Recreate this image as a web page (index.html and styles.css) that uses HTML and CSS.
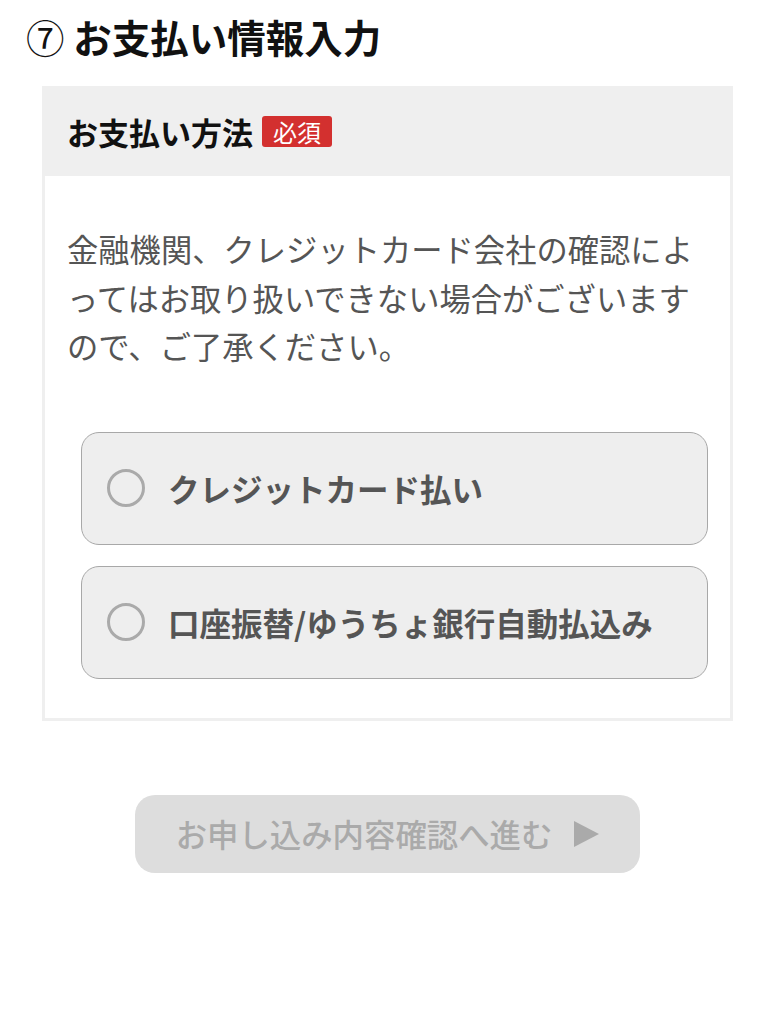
FILE: index.html
```html
<!DOCTYPE html>
<html lang="ja">
<head>
<meta charset="utf-8">
<link rel="stylesheet" href="styles.css">
</head>
<body>
<h1 class="title"><span class="num">⑦</span> お支払い情報入力</h1>
<section class="card">
  <div class="card-head">
    <span class="card-title">お支払い方法</span>
    <span class="badge">必須</span>
  </div>
  <div class="card-body">
    <p class="note">金融機関、クレジットカード会社の確認によってはお取り扱いできない場合がございますので、ご了承ください。</p>
    <div class="options">
      <label class="option"><span class="radio"></span><span class="option-label">クレジットカード払い</span></label>
      <label class="option"><span class="radio"></span><span class="option-label">口座振替/ゆうちょ銀行自動払込み</span></label>
    </div>
  </div>
</section>
<div class="actions">
  <button class="next" type="button">お申し込み内容確認へ進む<span class="arrow"></span></button>
</div>
</body>
</html>
```

FILE: styles.css
```css
* { box-sizing: border-box; }
body {
  margin: 0;
  background: #fff;
  font-family: "Noto Sans CJK JP", "Noto Sans", sans-serif;
  color: #111;
}
.title {
  margin: 0;
  padding: 14px 0 0 26px;
  height: 86px;
  font-size: 38.5px;
  line-height: 44px;
  font-weight: 700;
  color: #111;
}
.num {
  font-weight: 400;
}
.card {
  margin: 0 42px;
  border: 3px solid #efefef;
  border-top: 0;
}
.card-head {
  background: #efefef;
  height: 90px;
  display: flex;
  align-items: center;
  padding-left: 22px;
  gap: 9px;
}
.card-title {
  font-size: 31px;
  font-weight: 700;
  color: #111;
}
.badge {
  background: #d3302f;
  color: #fff;
  font-size: 24px;
  line-height: 31px;
  padding: 0 11px;
  border-radius: 3px;
}
.card-body {
  padding: 49px 22px 39px 22px;
}
.note {
  margin: 0;
  font-size: 31.3px;
  line-height: 48.5px;
  color: #555;
}
.options {
  margin: 61px 0 0 14px;
  display: flex;
  flex-direction: column;
  gap: 21px;
}
.option {
  height: 113px;
  background: #eee;
  border: 1px solid #a8a8a8;
  border-radius: 18px;
  display: flex;
  align-items: center;
  padding-left: 25px;
  gap: 23px;
}
.radio {
  width: 38px;
  height: 38px;
  border: 3px solid #aaa;
  border-radius: 50%;
  background: #eee;
  flex: none;
}
.option-label {
  font-size: 31.5px;
  font-weight: 700;
  color: #555;
}
.actions {
  display: flex;
  justify-content: center;
  padding-top: 74px;
}
.next {
  width: 505px;
  height: 78px;
  border: 0;
  border-radius: 20px;
  background: #ddd;
  color: #aaa;
  font-family: "Noto Sans CJK JP", "Noto Sans", sans-serif;
  font-size: 31.4px;
  font-weight: 500;
  display: flex;
  align-items: center;
  justify-content: center;
  gap: 22px;
  padding: 0;
}
.arrow {
  width: 0;
  height: 0;
  border-top: 13px solid transparent;
  border-bottom: 13px solid transparent;
  border-left: 25px solid #aaa;
}
```
